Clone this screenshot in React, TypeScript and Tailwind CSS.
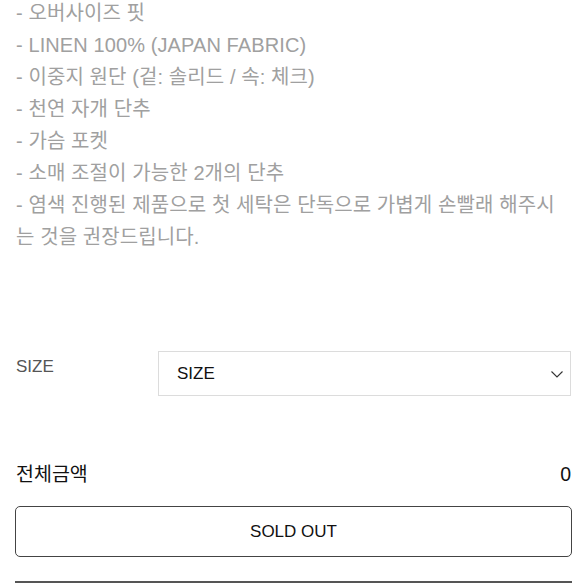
import React from 'react';

const lines = [
  '- 오버사이즈 핏',
  '- LINEN 100% (JAPAN FABRIC)',
  '- 이중지 원단 (겉: 솔리드 / 속: 체크)',
  '- 천연 자개 단추',
  '- 가슴 포켓',
  '- 소매 조절이 가능한 2개의 단추',
  '- 염색 진행된 제품으로 첫 세탁은 단독으로 가볍게 손빨래 해주시는 것을 권장드립니다.',
];

export default function App() {
  return (
    <div
      className="w-[587px] h-[587px] overflow-hidden bg-white"
      style={{ fontFamily: '"Liberation Sans", "Noto Sans CJK KR", sans-serif' }}
    >
      {/* Description */}
      <div className="mt-[-3px] pl-[16px] pr-[26px] text-[20px] leading-[32px] tracking-[0.1px] text-[#a0a0a0] break-all">
        {lines.map((l) => (
          <p key={l}>{l}</p>
        ))}
      </div>

      {/* Size option */}
      <div className="mt-[98px] flex items-start px-[16px]">
        <div className="w-[142px] pt-[4px] text-[17px] leading-[24px] text-[#555]">SIZE</div>
        <div className="flex h-[45px] flex-1 items-center justify-between border border-[#dcdcdc] pl-[18px] pr-[6px]">
          <span className="text-[17px] text-[#111]">SIZE</span>
          <svg width="14" height="14" viewBox="0 0 14 14" fill="none">
            <path d="M1.5 4.5 L7 10 L12.5 4.5" stroke="#333" strokeWidth="1.1" />
          </svg>
        </div>
      </div>

      {/* Total */}
      <div className="mt-[63px] flex items-center justify-between px-[16px] text-[19.5px] leading-[30px] text-[#111]">
        <span>전체금액</span>
        <span>0</span>
      </div>

      {/* Sold out */}
      <div className="mt-[17px] px-[15px]">
        <button className="flex h-[51px] w-full items-center justify-center rounded-[5px] border-[1.5px] border-[#444] text-[17px] text-[#111]">
          SOLD OUT
        </button>
        <div className="mt-[24px] h-[2px] w-full bg-[#555]" />
      </div>
    </div>
  );
}
